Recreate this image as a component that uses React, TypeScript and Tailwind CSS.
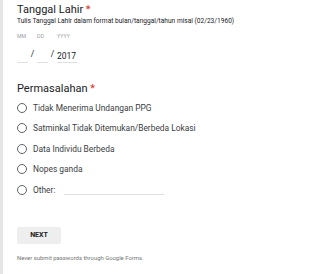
import React from "react";

const options = [
  "Tidak Menerima Undangan PPG",
  "Satminkal Tidak Ditemukan/Berbeda Lokasi",
  "Data Individu Berbeda",
  "Nopes ganda",
];

function Radio() {
  return (
    <span className="block w-[10px] h-[10px] rounded-full border-[1.5px] border-[#5f6368] shrink-0" />
  );
}

export default function App() {
  return (
    <div className="flex w-[320px] h-[274px] bg-white font-['Roboto',sans-serif] text-[#202124] overflow-hidden">
      <div className="w-[3px] bg-[#e6e6e6] shrink-0" />
      <div className="flex flex-col pl-[14px] pt-[3px] flex-1">
        <div className="text-[11px] leading-[14px]">
          Tanggal Lahir <span className="text-[#d93025]">*</span>
        </div>
        <div className="text-[6.6px] leading-[8px] mt-[0px]">
          Tulis Tanggal Lahir dalam format bulan/tanggal/tahun misal (02/23/1960)
        </div>
        <div className="flex items-start mt-[8px]">
          <div className="flex flex-col w-[11px]">
            <span className="text-[5.3px] leading-[6px] text-[#a0a0a0]">MM</span>
            <span className="mt-[12px] h-[12px] border-b border-[#e0e0e0]" />
          </div>
          <span className="w-[9px] text-center text-[8.5px] leading-[10px] mt-[16px]">/</span>
          <div className="flex flex-col w-[11px]">
            <span className="text-[5.3px] leading-[6px] text-[#a0a0a0]">DD</span>
            <span className="mt-[12px] h-[12px] border-b border-[#e0e0e0]" />
          </div>
          <span className="w-[9px] text-center text-[8.5px] leading-[10px] mt-[16px]">/</span>
          <div className="flex flex-col w-[20px]">
            <span className="text-[5.3px] leading-[6px] text-[#a0a0a0]">YYYY</span>
            <span className="mt-[12px] h-[12px] border-b border-[#e0e0e0] text-[8.5px] leading-[10px]">2017</span>
          </div>
        </div>
        <div className="text-[11px] leading-[14px] mt-[19px]">
          Permasalahan <span className="text-[#d93025]">*</span>
        </div>
        <div className="flex flex-col mt-[2px]">
          {options.map((o) => (
            <div key={o} className="flex items-center h-[20.3px] gap-[6px]">
              <Radio />
              <span className="text-[8.4px] leading-[10px] text-[#3c4043]">{o}</span>
            </div>
          ))}
          <div className="flex items-center h-[22px] gap-[6px]">
            <Radio />
            <span className="text-[8.4px] leading-[10px] text-[#3c4043]">Other:</span>
            <span className="w-[100px] h-[10px] border-b border-[#e0e0e0] ml-[3px]" />
          </div>
        </div>
        <div className="mt-[26px]">
          <div className="w-[44px] h-[17px] bg-[#eeeeee] rounded-[2px] flex items-center justify-center text-[7px] font-bold text-[#202124]">
            NEXT
          </div>
        </div>
        <div className="text-[5.9px] leading-[8px] text-[#757575] mt-[10px]">
          Never submit passwords through Google Forms.
        </div>
      </div>
    </div>
  );
}
